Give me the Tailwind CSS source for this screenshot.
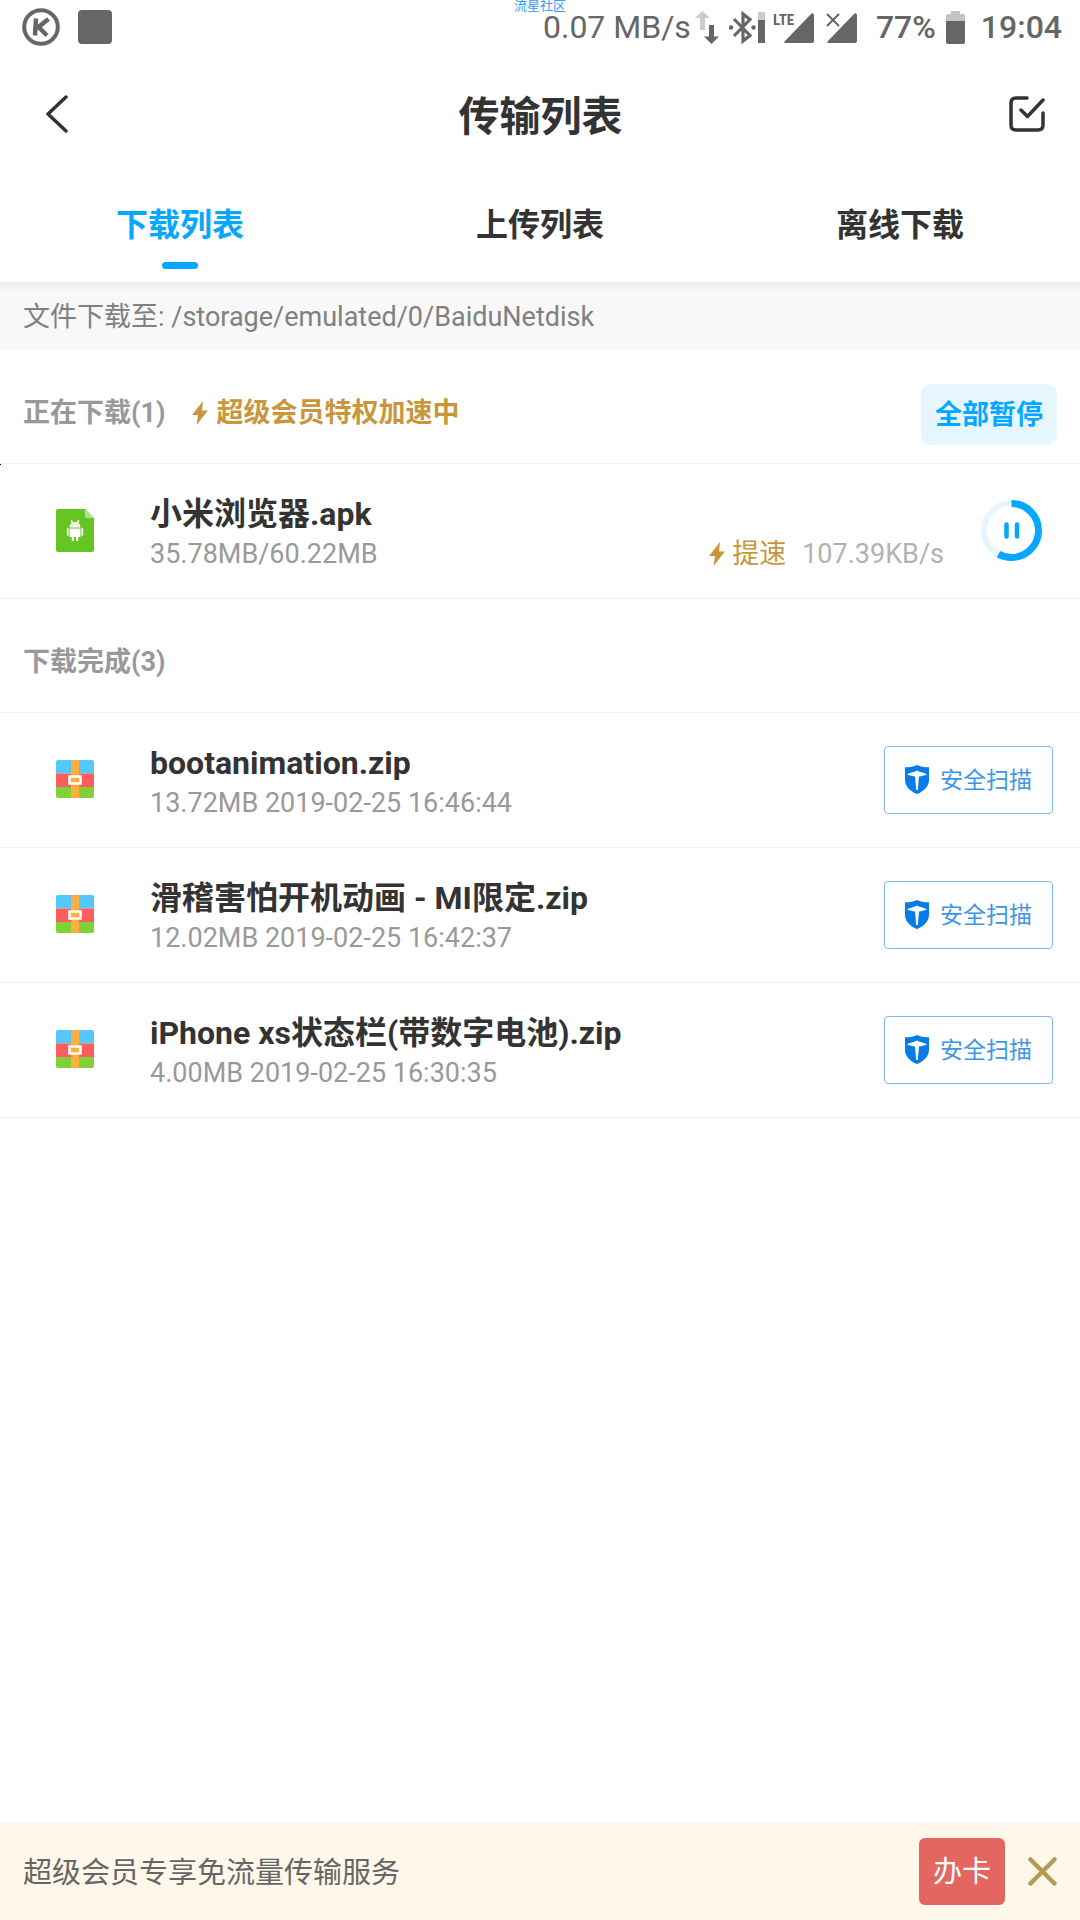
<!DOCTYPE html>
<html lang="zh-CN">
<head>
    <meta charset="UTF-8">
    <meta name="viewport" content="width=device-width, initial-scale=1.0">
    <title>传输列表</title>
    <script src="https://cdn.jsdelivr.net/npm/@tailwindcss/browser@4"></script>
</head>
<body class="bg-white font-['Roboto','Noto_Sans_CJK_SC',sans-serif] text-[#333333]">
    <!-- shared icons -->
    <svg class="hidden">
        <symbol id="bolt" viewBox="0 0 16 24"><path d="M11 0 0 14h6L4.500 24 16 9.500h-6z" fill="#c8963c"/></symbol>
        <symbol id="zip" viewBox="0 0 38 38">
            <path d="M2 0h34a2 2 0 0 1 2 2v11.500H0V2a2 2 0 0 1 2-2z" fill="#54c8fa"/>
            <path d="M0 13.500h38V27H0z" fill="#fc5e5e"/>
            <path d="M0 27h38v9a2 2 0 0 1-2 2H2a2 2 0 0 1-2-2z" fill="#80d037"/>
            <path d="M15 0h8v38h-8z" fill="#ffae3f"/>
            <rect x="13.500" y="16.500" width="11" height="7" fill="#ffae3f" stroke="#fff" stroke-width="2.500"/>
        </symbol>
        <symbol id="shield" viewBox="0 0 24 29">
            <path d="M12 0c3 1.600 7 2.300 12 2.300V15c0 6-5 11.500-12 14C5 26.500 0 21 0 15V2.300C5 2.300 9 1.600 12 0z" fill="#077be6"/>
            <path d="M2 9.500C5 7.600 8.500 7.400 12 5.500c3.500 1.900 7 2.100 10 4-3 .9-5.500 1.600-8 2L12.800 25h-1.600L10 11.500c-2.500-.4-5-1.100-8-2z" fill="#fff"/>
        </symbol>
    </svg>

    <div class="relative flex min-h-screen flex-col">
        <span class="absolute inset-x-0 top-0 text-center text-[13px] leading-[12px] text-[#2f9df4]">流星社区</span>

        <!-- status bar -->
        <div class="flex h-[54px] items-center justify-between pr-[18px] pl-[22px] text-[32px] text-[#666666]">
            <div class="flex items-center gap-[18px]">
                <svg class="size-[38px]" viewBox="0 0 38 38" fill="none" stroke="#666">
                    <circle cx="19" cy="19" r="16.800" stroke-width="4"/>
                    <path d="M14 10.500 13 27.500M26.500 11 16.500 19l8.500 8.500" stroke-width="4.500"/>
                </svg>
                <span class="size-[34px] rounded bg-[#666666]"></span>
            </div>
            <div class="flex items-center">
                <span>0.07 MB/s</span>
                <svg class="ml-1 h-[33px] w-6" viewBox="0 0 24 33">
                    <path d="M7.500 0 15 7h-5v12H5V7H0z" fill="#ccc"/>
                    <path d="M16.500 33 24 25.500h-5V14h-5v11.500H9z" fill="#666"/>
                </svg>
                <svg class="ml-2.5 h-[33px] w-9" viewBox="0 0 36 33">
                    <path d="M5 8 21 24.500l-7 5.500V3l7 5.500L5 25" fill="none" stroke="#666" stroke-width="3.200"/>
                    <circle cx="2" cy="16.500" r="2.200" fill="#666"/><circle cx="24.500" cy="16.500" r="2.200" fill="#666"/>
                    <path d="M29 1h7v8h-7z" fill="#ccc"/><path d="M29 9h7v23h-7z" fill="#666"/>
                </svg>
                <svg class="ml-2 h-[33px] w-[41px] overflow-visible" viewBox="0 0 41 33">
                    <path d="M38.500 2.500q2.500-1 2.500 2V30q0 2-2 2H13q-3 0-1-2z" fill="#666"/>
                    <text class="font-['Liberation_Sans_Narrow','Roboto_Condensed','Roboto',sans-serif]" x="0" y="14" font-size="15" font-weight="700" fill="#666" stroke="#fff" stroke-width="4" paint-order="stroke">LTE</text>
                </svg>
                <svg class="ml-3 h-[33px] w-[31px]" viewBox="0 0 31 33">
                    <path d="M28.500 2.500q2.500-1 2.500 2V30q0 2-2 2H3q-3 0-1-2z" fill="#666"/>
                    <path d="m1 3 12 12M13 3 1 15" stroke="#fff" stroke-width="5"/>
                    <path d="m1 3 12 12M13 3 1 15" stroke="#666" stroke-width="2"/>
                </svg>
                <span class="ml-[19px] font-medium">77%</span>
                <svg class="ml-2.5 h-[33px] w-[19px]" viewBox="0 0 19 33">
                    <path d="M5 0h9v3h3q2 0 2 2v5H0V5q0-2 2-2h3z" fill="#c4c4c4"/>
                    <path d="M0 10h19v21q0 2-2 2H2q-2 0-2-2z" fill="#666"/>
                </svg>
                <span class="ml-4 font-medium">19:04</span>
            </div>
        </div>

        <header class="flex h-[120px] items-center justify-between pr-[35px] pl-9">
            <button class="px-2.5" aria-label="返回">
                <svg class="h-10 w-6" viewBox="0 0 24 40" fill="none" stroke="#333" stroke-width="3.500" stroke-linecap="round" stroke-linejoin="round"><path d="M20 3 2 20l18 17"/></svg>
            </button>
            <h1 class="pt-2 text-[41px] font-bold">传输列表</h1>
            <button class="pl-2" aria-label="选择">
                <svg class="size-9" viewBox="0 0 36 36" fill="none" stroke="#333" stroke-width="3.500" stroke-linecap="round" stroke-linejoin="round"><path d="M18 2H7Q2 2 2 7v22q0 5 5 5h22q5 0 5-5V17M12 14l6.500 6.500L34 4"/></svg>
            </button>
        </header>

        <nav class="grid h-[108px] grid-cols-3 text-center text-[32px] font-bold">
            <a href="#" class="flex flex-col items-center gap-[13px] pt-[27px] text-[#06a7ff]">下载列表<span class="h-[7px] w-9 rounded bg-[#06a7ff]"></span></a>
            <a href="#" class="pt-[27px]">上传列表</a>
            <a href="#" class="pt-[27px]">离线下载</a>
        </nav>

        <p class="flex h-[68px] items-center bg-[#f8f8f8] bg-linear-to-b from-[#eeeeee] to-[#f8f8f8] to-15% px-[23px] pt-0.5 text-[27px] text-[#808080]">文件下载至: /storage/emulated/0/BaiduNetdisk</p>

        <main class="grow text-[27px]">
            <div class="flex h-[114px] items-center border-b border-[#ececec] px-[23px] pt-4">
                <h2 class="pb-0.5 font-bold text-[#999999]">正在下载(1)</h2>
                <svg class="mr-2 mb-1 ml-[27px] h-6 w-4"><use href="#bolt"/></svg>
                <span class="pb-0.5 font-bold text-[#c8963c]">超级会员特权加速中</span>
                <button class="ml-auto h-[61px] rounded-[10px] bg-[#e5f6ff] px-3.5 pt-0.5 font-bold text-[#06a7ff]">全部暂停</button>
            </div>

            <div class="relative flex h-[135px] items-center border-b border-[#ececec] pr-[38px] pl-14">
                <span class="absolute top-0 left-0 size-px bg-black"></span>
                <svg class="mr-14 mb-0.5 h-[43px] w-[38px]" viewBox="0 0 38 43">
                    <path d="M2 0h27l9 9v32a2 2 0 0 1-2 2H2a2 2 0 0 1-2-2V2a2 2 0 0 1 2-2z" fill="#65c523"/>
                    <path d="M29 0v7q0 2 2 2h7z" fill="#b2e291"/>
                    <path d="M13.500 18.500a5.500 5.500 0 0 1 11 0zM13.500 19.500h11V28h-2.300v4h-2.200v-4h-2v4h-2.200v-4h-2.300z" fill="#fff"/>
                    <path d="M11.700 19.500v6.500M26.300 19.500v6.500M15.500 12l1.200 2M22.500 12l-1.200 2" stroke="#fff" stroke-width="1.700" stroke-linecap="round"/>
                    <circle cx="17" cy="16" r=".6" fill="#65c523"/><circle cx="21" cy="16" r=".6" fill="#65c523"/>
                </svg>
                <div class="grow pt-1.5 leading-10">
                    <h3 class="text-[32px] font-bold">小米浏览器.apk</h3>
                    <div class="flex items-center text-[#999999]">
                        <span>35.78MB/60.22MB</span>
                        <svg class="mr-[7px] ml-auto h-6 w-4"><use href="#bolt"/></svg>
                        <a href="#" class="text-[#c8963c]">提速</a>
                        <span class="ml-4 text-[#b2b2b2]">107.39KB/s</span>
                    </div>
                </div>
                <button class="mb-0.5 ml-[37px]" aria-label="暂停">
                    <svg class="size-[61px]" viewBox="0 0 61 61" fill="none">
                        <circle cx="30.500" cy="30.500" r="27.500" stroke="#e5f6ff" stroke-width="6"/>
                        <circle cx="30.500" cy="30.500" r="27" stroke="#06a7ff" stroke-width="7" pathLength="100" stroke-dasharray="58 100" transform="rotate(-90 30.500 30.500)"/>
                        <path d="M25.500 24.500v12M36 24.500v12" stroke="#06a7ff" stroke-width="4.500" stroke-linecap="round"/>
                    </svg>
                </button>
            </div>

            <div class="flex h-[114px] items-center border-b border-[#ececec] px-[23px] pt-3.5">
                <h2 class="font-bold text-[#999999]">下载完成(3)</h2>
            </div>

            <div class="flex h-[135px] items-center border-b border-[#ececec] pr-[27px] pl-14">
                <svg class="mr-14 mb-0.5 size-[38px]"><use href="#zip"/></svg>
                <div class="grow pt-1.5 leading-10">
                    <h3 class="text-[32px] font-bold">bootanimation.zip</h3>
                    <p class="text-[#999999]">13.72MB 2019-02-25 16:46:44</p>
                </div>
                <button class="flex h-[68px] items-center gap-[11px] rounded border border-[#7fb9f0] px-5 text-[23px] text-[#3c96e6]">
                    <svg class="mb-0.5 h-[29px] w-6"><use href="#shield"/></svg><span class="pt-0.5">安全扫描</span>
                </button>
            </div>
            <div class="flex h-[135px] items-center border-b border-[#ececec] pr-[27px] pl-14">
                <svg class="mr-14 mb-0.5 size-[38px]"><use href="#zip"/></svg>
                <div class="grow pt-1.5 leading-10">
                    <h3 class="text-[32px] font-bold">滑稽害怕开机动画 - MI限定.zip</h3>
                    <p class="text-[#999999]">12.02MB 2019-02-25 16:42:37</p>
                </div>
                <button class="flex h-[68px] items-center gap-[11px] rounded border border-[#7fb9f0] px-5 text-[23px] text-[#3c96e6]">
                    <svg class="mb-0.5 h-[29px] w-6"><use href="#shield"/></svg><span class="pt-0.5">安全扫描</span>
                </button>
            </div>
            <div class="flex h-[135px] items-center border-b border-[#ececec] pr-[27px] pl-14">
                <svg class="mr-14 mb-0.5 size-[38px]"><use href="#zip"/></svg>
                <div class="grow pt-1.5 leading-10">
                    <h3 class="text-[32px] font-bold">iPhone xs状态栏(带数字电池).zip</h3>
                    <p class="text-[#999999]">4.00MB 2019-02-25 16:30:35</p>
                </div>
                <button class="flex h-[68px] items-center gap-[11px] rounded border border-[#7fb9f0] px-5 text-[23px] text-[#3c96e6]">
                    <svg class="mb-0.5 h-[29px] w-6"><use href="#shield"/></svg><span class="pt-0.5">安全扫描</span>
                </button>
            </div>
        </main>

        <footer class="flex h-[97px] items-center bg-[#fff7ea] px-[23px] text-[29px] text-[#666666]">
            <span class="grow pt-1">超级会员专享免流量传输服务</span>
            <button class="h-[67px] rounded-md bg-[#e36661] px-3.5 pt-0.5 text-white">办卡</button>
            <button class="ml-[23px]" aria-label="关闭">
                <svg class="size-[29px]" viewBox="0 0 29 29" stroke="#b39b55" stroke-width="4.500" stroke-linecap="round"><path d="m2.500 2.500 24 24M26.500 2.500l-24 24"/></svg>
            </button>
        </footer>
    </div>
</body>
</html>
